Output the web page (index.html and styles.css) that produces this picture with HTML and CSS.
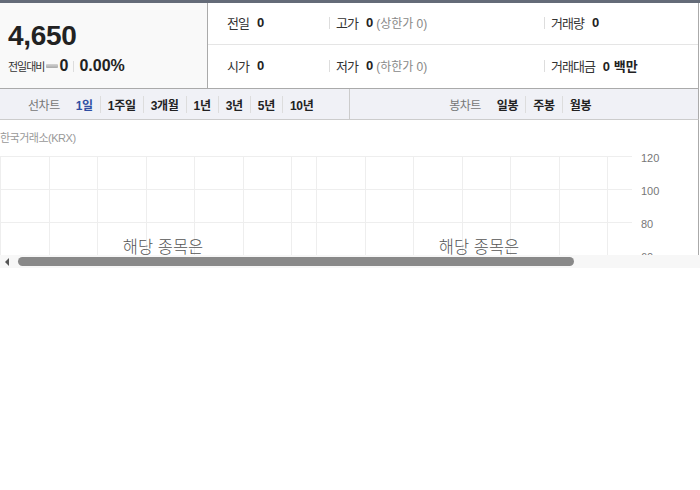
FILE: index.html
```html
<!DOCTYPE html>
<html lang="ko">
<head>
  <meta charset="UTF-8" />
  <title>시세</title>
  <link rel="stylesheet" href="styles.css">
</head>
<body>
  <div class="stock">
    <div class="topbar"></div>

    <div class="summary">
      <div class="now">
        <div class="price">4,650</div>
        <div class="change">
          <span class="change-label">전일대비</span>
          <span class="flat"></span>
          <b class="change-num">0</b>
          <span class="sep"></span>
          <b class="change-rate">0.00%</b>
        </div>
      </div>

      <div class="info">
        <div class="cell first"><span class="k">전일</span><b>0</b></div>
        <div class="cell"><span class="k">고가</span><b>0</b><span class="limit">(상한가 0)</span></div>
        <div class="cell"><span class="k">거래량</span><b>0</b></div>
        <div class="cell first"><span class="k">시가</span><b>0</b></div>
        <div class="cell"><span class="k">저가</span><b>0</b><span class="limit">(하한가 0)</span></div>
        <div class="cell"><span class="k">거래대금</span><b>0 백만</b></div>
      </div>
    </div>

    <div class="tabs">
      <div class="tab-group">
        <span class="tab-title">선차트</span>
        <a class="tab on">1일</a>
        <a class="tab">1주일</a>
        <a class="tab">3개월</a>
        <a class="tab">1년</a>
        <a class="tab">3년</a>
        <a class="tab">5년</a>
        <a class="tab">10년</a>
      </div>
      <div class="tab-group">
        <span class="tab-title">봉차트</span>
        <a class="tab">일봉</a>
        <a class="tab">주봉</a>
        <a class="tab">월봉</a>
      </div>
    </div>

    <div class="chart">
      <div class="source">한국거래소(KRX)</div>
      <div class="chart-body">
        <div class="pane">
          <div class="col"></div><div class="col"></div><div class="col"></div>
          <div class="col"></div><div class="col"></div><div class="col"></div>
          <div class="col narrow"></div>
          <p class="empty">해당 종목은</p>
        </div>
        <div class="pane">
          <div class="col"></div><div class="col"></div><div class="col"></div>
          <div class="col"></div><div class="col"></div><div class="col"></div>
          <div class="col narrow"></div>
          <p class="empty">해당 종목은</p>
        </div>
        <div class="axis">
          <span>120</span>
          <span>100</span>
          <span>80</span>
          <span>60</span>
        </div>
      </div>
    </div>

    <div class="scrollbar">
      <span class="arrow"></span>
      <span class="thumb"></span>
    </div>
  </div>
</body>
</html>
```

FILE: styles.css
```css
body {
  margin: 0;
  background: #fff;
  font-family: 'Liberation Sans', 'Noto Sans CJK KR', sans-serif;
  color: #222;
}

.stock {
  width: 700px;
}

.topbar {
  height: 3px;
  background: #646b78;
}

/* summary */
.summary {
  display: flex;
  height: 85px;
  width: 698px;
  border-right: 1px solid #aaa;
}

.now {
  width: 208px;
  background: #f9f9f9;
  border-right: 1px solid #aaa;
  padding: 17px 0 0 8px;
  box-sizing: border-box;
}

.price {
  font-size: 28px;
  font-weight: bold;
  line-height: 32px;
  letter-spacing: -0.3px;
}

.change {
  display: flex;
  align-items: center;
  margin-top: 4px;
  height: 20px;
}

.change-label {
  font-size: 11px;
  letter-spacing: -1px;
  color: #333;
}

.flat {
  display: inline-block;
  width: 12px;
  height: 4px;
  margin: 0 1px 0 2px;
  border-radius: 1px;
  background: linear-gradient(#d4d4d4, #a9a9a9);
}

.change-num {
  font-size: 16px;
}

.sep {
  width: 1px;
  height: 11px;
  background: #ddd;
  margin: 0 5px;
}

.change-rate {
  font-size: 16px;
}

.info {
  flex: 1;
  display: grid;
  grid-template-columns: 121px 215px 1fr;
  grid-template-rows: 42px 43px;
}

.cell {
  display: flex;
  align-items: center;
  font-size: 13px;
  padding-bottom: 2px;
}

.cell:nth-child(-n+3) {
  border-bottom: 1px solid #e5e5e5;
}

.cell:not(.first)::before {
  content: "";
  width: 1px;
  height: 12px;
  background: #ddd;
  margin-right: 6px;
}

.cell.first {
  padding-left: 19px;
}

.k {
  color: #333;
  letter-spacing: -1px;
  margin-right: 8px;
}

.cell b {
  font-size: 13px;
}

.limit {
  color: #888;
  font-size: 12px;
  margin-left: 3px;
}

/* tabs */
.tabs {
  display: flex;
  width: 698px;
  height: 30px;
  border: 1px solid #aaa;
  border-left: 0;
  border-bottom-color: #ccc;
  background: #f0f1f6;
}

.tab-group {
  flex: 1;
  display: flex;
  align-items: center;
  justify-content: center;
  font-size: 12px;
}

.tab-group + .tab-group {
  border-left: 1px solid #ccc;
}

.tab-title {
  color: #777;
  letter-spacing: -0.5px;
  margin-right: 9px;
}

.tab {
  color: #222;
  font-weight: bold;
  letter-spacing: -0.3px;
  padding: 0 7px;
}

.tab + .tab {
  border-left: 1px solid #ddd;
}

.tab.on {
  color: #2f4ea3;
}

/* chart */
.chart {
  width: 698px;
  height: 135px;
  border-right: 1px solid #aaa;
  overflow: hidden;
}

.source {
  font-size: 11px;
  color: #999;
  letter-spacing: -0.5px;
  line-height: 14px;
  padding-top: 11px;
}

.chart-body {
  display: flex;
  margin-top: 11px;
}

.pane {
  position: relative;
  display: flex;
  height: 132px;
  background-image: linear-gradient(#eee 1px, transparent 1px);
  background-size: 100% 33px;
}

.col {
  width: 48.5px;
  border-left: 1px solid #eee;
  box-sizing: border-box;
}

.col.narrow {
  width: 25px;
}

.empty {
  position: absolute;
  top: 78px;
  left: 10px;
  right: 0;
  margin: 0;
  text-align: center;
  font-family: 'Noto Sans CJK KR', sans-serif;
  font-size: 16.5px;
  font-weight: 300;
  color: #555;
}

.axis {
  display: flex;
  flex-direction: column;
  margin: -5px 0 0 9px;
  font-size: 11px;
  color: #777;
}

.axis span {
  height: 33px;
  line-height: 14px;
}

/* fake scrollbar */
.scrollbar {
  display: flex;
  align-items: center;
  height: 13px;
  background: #f7f7f7;
}

.arrow {
  width: 0;
  height: 0;
  margin: 0 9px 0 5px;
  border-top: 4px solid transparent;
  border-bottom: 4px solid transparent;
  border-right: 4px solid #555;
}

.thumb {
  width: 556px;
  height: 9px;
  border-radius: 5px;
  background: #898989;
}
```
